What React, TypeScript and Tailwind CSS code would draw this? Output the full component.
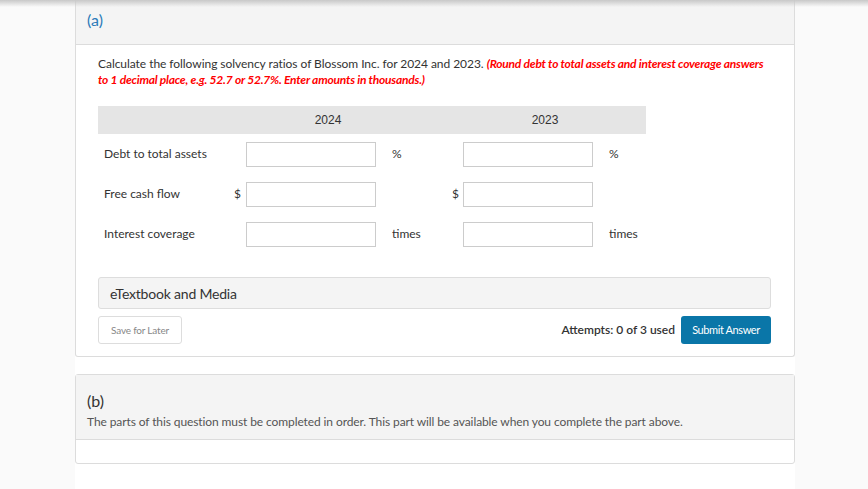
import React from "react";

const lato = { fontFamily: "Lato, 'Open Sans', sans-serif" };

type RowProps = {
  label: string;
  dollar?: boolean;
  unit?: string;
};

function RatioRow({ label, dollar, unit }: RowProps) {
  return (
    <div className="flex h-[40px] items-center text-[12px] text-[#333]">
      <div className="w-[131px] pl-[6px]">{label}</div>
      <div className="flex w-[217px] items-center">
        <div className="w-[17px] pr-[5px] text-right">{dollar ? "$" : ""}</div>
        <input type="text" className="h-[25px] w-[130px] border border-[#cccccc] bg-white outline-none" />
        <div className="w-[70px] pl-[16px]">{unit}</div>
      </div>
      <div className="flex w-[200px] items-center">
        <div className="w-[17px] pr-[4px] text-right">{dollar ? "$" : ""}</div>
        <input type="text" className="h-[25px] w-[130px] border border-[#cccccc] bg-white outline-none" />
        <div className="w-[53px] pl-[16px]">{unit}</div>
      </div>
    </div>
  );
}

export default function App() {
  return (
    <div className="relative min-h-[489px] bg-[#fafafa]" style={lato}>
      <div className="pointer-events-none absolute left-0 right-0 top-0 h-[7px] bg-gradient-to-b from-[#c8c8c8] to-transparent" />
      <div className="ml-[75px] min-h-[489px] w-[720px] bg-white">
        {/* part a */}
        <div className="rounded-b-[3px] border-x border-b border-[#dcdcdc]">
          <div className="flex h-[45px] items-center border-b border-[#dcdcdc] bg-[#f4f4f4] pb-[4px] pl-[11px]">
            <span className="text-[16px] text-[#2b7bb9]">(a)</span>
          </div>
          <div className="pb-[12px] pl-[22px] pr-[23px] pt-[11px]">
            <p className="text-[12px] leading-[16px] tracking-[-0.05px] text-[#333]">
              Calculate the following solvency ratios of Blossom Inc. for 2024 and 2023.{" "}
              <span className="font-bold italic tracking-[-0.22px] text-[#ff0000]">
                (Round debt to total assets and interest coverage answers
                <br />
                to 1 decimal place, e.g. 52.7 or 52.7%. Enter amounts in thousands.)
              </span>
            </p>

            <div className="mt-[18px] w-[548px]">
              <div
                className="flex h-[28px] items-center bg-[#e5e5e5] text-[12px] text-[#333]"
                style={{ fontFamily: "'Liberation Sans', Arial, sans-serif" }}
              >
                <div className="w-[131px]" />
                <div className="w-[198px] text-center">2024</div>
                <div className="w-[19px]" />
                <div className="w-[198px] text-center">2023</div>
              </div>
              <RatioRow label="Debt to total assets" unit="%" />
              <RatioRow label="Free cash flow" dollar />
              <RatioRow label="Interest coverage" unit="times" />
            </div>

            <div className="mt-[23px] flex h-[32px] items-center rounded-[3px] border border-[#dddddd] bg-[#f4f4f4] pl-[11px] text-[14px] tracking-[-0.2px] text-[#333]">
              eTextbook and Media
            </div>

            <div className="mt-[7px] flex items-center justify-between">
              <button
                type="button"
                className="h-[28px] w-[84px] rounded-[3px] border border-[#dddddd] bg-white text-[10px] tracking-[-0.2px] text-[#888]"
              >
                Save for Later
              </button>
              <div className="flex items-center gap-[6px]">
                <span className="text-[12px] font-semibold text-[#333]">Attempts: 0 of 3 used</span>
                <button
                  type="button"
                  className="h-[28px] w-[90px] rounded-[3px] bg-[#0a76a8] text-[11px] tracking-[-0.4px] text-white"
                >
                  Submit Answer
                </button>
              </div>
            </div>
          </div>
        </div>

        {/* part b */}
        <div className="mt-[17px] rounded-[3px] border border-[#dcdcdc]">
          <div className="h-[65px] border-b border-[#dcdcdc] bg-[#f4f4f4] pl-[11px] pt-[16px]">
            <div className="text-[16px] leading-[20px] text-[#333]">(b)</div>
            <div className="mt-[3px] text-[12px] leading-[16px] tracking-[-0.1px] text-[#555]">
              The parts of this question must be completed in order. This part will be available when you complete the part above.
            </div>
          </div>
          <div className="h-[23px]" />
        </div>
      </div>
    </div>
  );
}
